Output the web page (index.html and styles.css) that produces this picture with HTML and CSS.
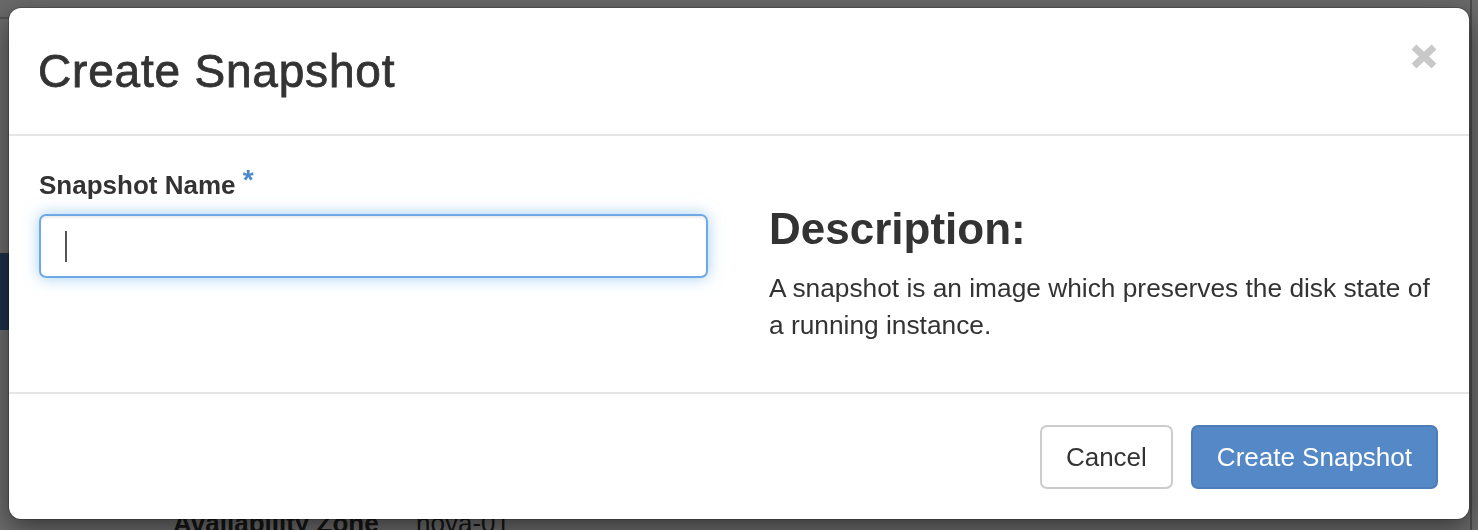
FILE: index.html
```html
<!DOCTYPE html>
<html lang="en">
<head>
  <meta charset="UTF-8" />
  <meta name="viewport" content="width=device-width, initial-scale=1.0"/>
  <title>Create Snapshot</title>
  <link rel="stylesheet" href="styles.css">
</head>
<body>
  <!-- page behind the dialog -->
  <div class="page">
    <div class="topbar"></div>
    <div class="main">
      <div class="sidebar">
        <div class="nav-item active"></div>
      </div>
      <div class="details">
        <dl>
          <dt>Availability Zone</dt>
          <dd>nova-01</dd>
        </dl>
      </div>
    </div>
  </div>

  <div class="backdrop"></div>

  <div class="modal">
    <div class="modal-header">
      <h3 class="modal-title">Create Snapshot</h3>
      <button class="close" aria-label="Close">
        <svg width="28" height="27" viewBox="0 0 28 27">
          <path d="M4 4 L24 23 M24 4 L4 23" stroke="#c9c9c9" stroke-width="7" fill="none"/>
        </svg>
      </button>
    </div>

    <div class="modal-body">
      <div class="left">
        <label>Snapshot Name <span class="req">*</span></label>
        <div class="form-control focused"><span class="caret"></span></div>
      </div>
      <div class="right">
        <h3>Description:</h3>
        <p>A snapshot is an image which preserves the disk state of a running instance.</p>
      </div>
    </div>

    <div class="modal-footer">
      <button class="btn btn-default">Cancel</button>
      <button class="btn btn-primary">Create Snapshot</button>
    </div>
  </div>
</body>
</html>
```

FILE: styles.css
```css
body {
  margin: 0;
  padding: 0;
  height: 100vh;
  overflow: hidden;
  background: #fff;
  font-family: "Liberation Sans", Helvetica, Arial, sans-serif;
  color: #333;
}

.page {
  width: 1470px;
  height: 100vh;
  border-right: 2px solid #b4b4b4;
}

.topbar {
  height: 17px;
  background: #fafafa;
  border-bottom: 2px solid #c4c4c4;
}

.main {
  display: flex;
}

.sidebar {
  width: 140px;
}

.nav-item.active {
  margin-top: 234px;
  height: 77px;
  background: #4873ad;
}

.details {
  padding: 486px 0 0 33px;
}

.details dl {
  display: flex;
  margin: 0;
  font-size: 26px;
  line-height: 37px;
}

.details dt {
  width: 243px;
  font-weight: bold;
}

.details dd {
  margin: 0;
}

.backdrop {
  position: fixed;
  top: 0;
  left: 0;
  right: 0;
  bottom: 0;
  background: rgba(0, 0, 0, 0.58);
}

.modal {
  position: fixed;
  top: 8px;
  left: 9px;
  width: 1460px;
  background: #fff;
  border-radius: 12px;
  box-shadow: 0 0 0 1px rgba(0, 0, 0, 0.2), 0 9px 28px rgba(0, 0, 0, 0.5);
}

.modal-header {
  display: flex;
  justify-content: space-between;
  align-items: center;
  height: 126px;
  padding: 0 31px 0 29px;
  border-bottom: 2px solid #e5e5e5;
}

.modal-title {
  margin: 0;
  font-size: 46px;
  line-height: 1;
  font-weight: normal;
  letter-spacing: 0.8px;
  -webkit-text-stroke: 0.8px #333;
}

.close {
  align-self: flex-start;
  margin-top: 35px;
  padding: 0;
  width: 28px;
  height: 27px;
  border: none;
  background: none;
  cursor: pointer;
}

.close svg {
  display: block;
}

.modal-body {
  display: grid;
  grid-template-columns: 669px 669px;
  column-gap: 61px;
  padding: 30px 31px 48px 30px;
}

.left label {
  display: block;
  margin-bottom: 10px;
  font-size: 26px;
  line-height: 37px;
  font-weight: bold;
}

.req {
  color: #4a89cc;
  font-size: 28px;
  line-height: 1;
  vertical-align: 5px;
}

.form-control {
  display: flex;
  align-items: center;
  height: 64px;
  padding-left: 24px;
  box-sizing: border-box;
  border: 2px solid #ccc;
  border-radius: 7px;
}

.form-control.focused {
  border-color: #6ea8e6;
  box-shadow: inset 0 2px 2px rgba(0, 0, 0, 0.075), 0 0 15px rgba(102, 175, 233, 0.6);
}

.caret {
  width: 2px;
  height: 31px;
  background: #555;
}

.right h3 {
  margin: 39px 0 17px;
  font-size: 44px;
  line-height: 48px;
  font-weight: bold;
}

.right p {
  margin: 0;
  font-size: 26.3px;
  line-height: 37px;
}

.modal-footer {
  display: flex;
  justify-content: flex-end;
  gap: 18px;
  padding: 31px 31px 30px;
  border-top: 2px solid #e5e5e5;
}

.btn {
  height: 64px;
  padding: 0 24px;
  font-family: inherit;
  font-size: 26px;
  border: 2px solid transparent;
  border-radius: 7px;
  cursor: pointer;
}

.btn-default {
  background: #fff;
  color: #333;
  border-color: #ccc;
}

.btn-primary {
  background: #5588c6;
  color: #fff;
  border-color: #4d7cb8;
}
```
